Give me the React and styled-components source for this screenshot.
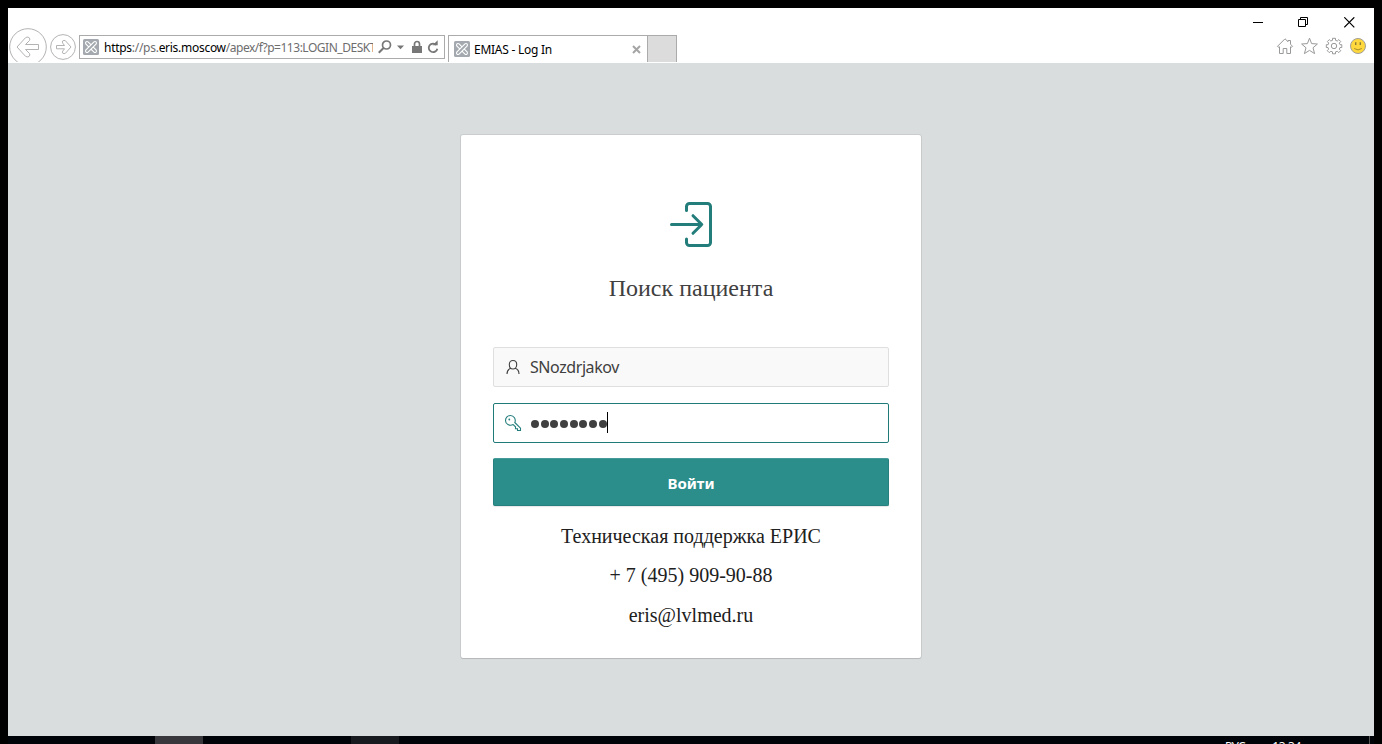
import React from 'react';
import styled, { createGlobalStyle } from 'styled-components';

const Global = createGlobalStyle`
  * { box-sizing: border-box; }
  html, body { margin: 0; background: #000; overflow: hidden; }
  svg { display: block; flex: none; }
`;

const uiFont = '"Noto Sans", "Open Sans", sans-serif';

const Screen = styled.div`
  width: 1382px;
  height: 744px;
  padding: 8px 8px 0;
  background: #000;
  overflow: hidden;
  display: flex;
  flex-direction: column;
  font-family: ${uiFont};
`;

const Chrome = styled.header`
  height: 55px;
  flex: none;
  background: #fff;
  display: flex;
  justify-content: space-between;
`;

const Navigation = styled.div`
  height: 34px;
  margin: 20px 0 0 1px;
  display: flex;
  align-items: flex-start;
  gap: 3px;
  overflow: hidden;
`;

const ForwardSlot = styled.div`
  padding-top: 6px;
`;

const AddressBar = styled.div`
  width: 366px;
  height: 24px;
  margin-top: 7px;
  padding: 0 5px 0 3px;
  border: 1px solid #ababab;
  display: flex;
  align-items: center;
`;

const Url = styled.div`
  width: 269px;
  margin: 1px 5px 0 5px;
  font-size: 12px;
  line-height: 20px;
  letter-spacing: -0.28px;
  white-space: nowrap;
  overflow: hidden;
  color: #6d6d6d;
  b { font-weight: 400; color: #000; }
`;

const UrlPath = styled.span`
  letter-spacing: -0.48px;
`;

const AddressTools = styled.div`
  display: flex;
  align-items: center;
`;

const Tabs = styled.div`
  display: flex;
  height: 27px;
  margin-top: 7px;
`;

const Tab = styled.div`
  width: 200px;
  border: 1px solid #ababab;
  border-bottom: 0;
  padding: 0 6px 0 5px;
  display: flex;
  align-items: center;
`;

const TabTitle = styled.span`
  flex: 1;
  margin: 2px 0 0 4px;
  font-size: 12px;
  line-height: 18px;
  letter-spacing: -0.26px;
  white-space: nowrap;
  color: #000;
`;

const NewTab = styled.div`
  width: 29px;
  background: #dcdcdc;
  border: solid #ababab;
  border-width: 1px 1px 0 0;
`;

const WindowSide = styled.div`
  display: flex;
  flex-direction: column;
  align-items: flex-end;
`;

const Captions = styled.div`
  height: 28px;
  padding-right: 19px;
  display: flex;
  align-items: center;
  gap: 34px;
  svg:last-child { margin-left: 1px; }
`;

const Commands = styled.div`
  height: 20px;
  padding-right: 7px;
  display: flex;
  align-items: center;
  gap: 6px;
  svg:first-child { margin-right: 1px; }
`;

const Page = styled.main`
  height: 673px;
  flex: none;
  padding-top: 72px;
  background: #d9dddd;
  display: flex;
  justify-content: center;
  align-items: flex-start;
`;

const Card = styled.section`
  width: 460px;
  height: 523px;
  padding: 65px 32px 0;
  background: #fff;
  border-radius: 2px;
  box-shadow: 0 0 0 1px rgba(0, 0, 0, 0.07), 0 1px 1px rgba(0, 0, 0, 0.1);
  display: flex;
  flex-direction: column;
  align-items: center;
`;

const Title = styled.h1`
  margin: 24px 0 0;
  font: 400 24px/32px "Liberation Serif", serif;
  color: #404040;
`;

const Field = styled.div`
  width: 100%;
  height: 40px;
  margin-top: ${(p) => p.$top};
  padding-left: 10px;
  border: 1px solid ${(p) => (p.$focused ? '#1f7a78' : '#dfdfdf')};
  border-radius: 2px;
  background: ${(p) => (p.$focused ? '#fff' : '#f9f9f9')};
  display: flex;
  align-items: center;
  gap: 8px;
`;

const Username = styled.span`
  font-size: 16px;
  line-height: 22px;
  letter-spacing: -0.42px;
  color: #404040;
`;

const Password = styled.span`
  height: 21px;
  margin-bottom: 1px;
  border-right: 1px solid #000;
  display: flex;
  align-items: center;
  gap: 1.7px;
  padding: 3px 0 0 1px;
`;

const Dot = styled.i`
  width: 8px;
  height: 8px;
  border-radius: 50%;
  background: #404040;
`;

const Submit = styled.button`
  width: 100%;
  height: 48px;
  margin: 15px 0 0;
  padding: 1px 0 0;
  border: 1px solid #26807e;
  border-top-color: #469b98;
  border-radius: 2px;
  background: #2b8e8b;
  box-shadow: 0 1px 1px rgba(0, 0, 0, 0.1);
  color: #fff;
  font: 700 15px/20px ${uiFont};
  flex: none;
`;

const Support = styled.div`
  margin-top: 18px;
  display: flex;
  flex-direction: column;
  align-items: center;
  gap: 15px;
  font: 20px/24px "Liberation Serif", serif;
  color: #202020;
  span:last-child { margin-top: 1px; }
`;

const Taskbar = styled.footer`
  height: 8px;
  flex: none;
  background: #000308;
  overflow: hidden;
  display: flex;
`;

const TaskItem = styled.div`
  width: 48px;
  margin-left: ${(p) => p.$left};
  background: ${(p) => p.$color};
`;

const Tray = styled.div`
  margin-left: auto;
  padding: 2px 68px 0 0;
  display: flex;
  gap: 27px;
  font: 12px/17px ${uiFont};
  letter-spacing: -0.4px;
  color: #fff;
`;

const DesktopEdge = styled.div`
  width: 1px;
  margin-right: 4px;
  background: #555;
`;

const SiteIcon = () => (
  <svg width="16" height="16" viewBox="0 0 16 16">
    <rect width="16" height="16" rx="1.5" fill="#a3a9ae" />
    <g fill="none" strokeLinecap="round">
      <path d="M4 4l8 8" stroke="#fff" strokeWidth="4" />
      <path d="M4 4l8 8" stroke="#a3a9ae" strokeWidth="1.8" />
      <path d="M12 4l-8 8" stroke="#fff" strokeWidth="4" />
      <path d="M12 4l-8 8" stroke="#a3a9ae" strokeWidth="1.8" />
    </g>
  </svg>
);

const BackIcon = () => (
  <svg width="38" height="34" viewBox="0 0 38 34" fill="none" stroke="#b3b3b3">
    <circle cx="19" cy="19" r="18.3" />
    <path d="M8 19L16.5 9.7Q18 8.5 20 9.5Q21.5 11 20.5 12.5L16.5 16.5H29.5V21.5H16.5L20.5 25.5Q21.5 27 20 28.5Q18 29.5 16.5 28.3Z" />
  </svg>
);

const ForwardIcon = () => (
  <svg width="26" height="26" viewBox="0 0 26 26" fill="none" stroke="#b3b3b3">
    <circle cx="13" cy="13" r="12.4" />
    <path d="M21 13L15.5 6.8Q14 5.8 12.6 7Q12 8 12.8 9.2L14.5 11.5H6.5V14.8H14.5L12.8 17Q12 18.2 12.8 19.2Q14 20.2 15.5 19.2Z" />
  </svg>
);

export default function App() {
  return (
    <Screen>
      <Global />
      <Chrome>
        <Navigation>
          <BackIcon />
          <ForwardSlot><ForwardIcon /></ForwardSlot>
          <AddressBar>
            <SiteIcon />
            <Url>
              <b>https</b>://ps.<b>eris.moscow</b>
              <UrlPath>/apex/f?p=113:LOGIN_DESKTOP</UrlPath>
            </Url>
            <AddressTools>
              <svg width="61" height="14" viewBox="0 0 61 14" fill="none" stroke="#777" strokeWidth="2">
                <circle cx="8.5" cy="5" r="4" strokeWidth="1.7" />
                <path d="M5.5 8L0.8 12.8" />
                <path d="M19 5.5h7l-3.5 3.7z" fill="#777" stroke="none" />
                <path d="M36.5 6V4a2.5 2.5 0 0 1 5 0v2" strokeWidth="1.7" />
                <rect x="34" y="6" width="10" height="7" fill="#777" stroke="none" />
                <path d="M58.3 5A4.3 4.3 0 1 0 59.3 8.7" strokeWidth="1.8" />
                <path d="M54.5 5.3h5.2V0.3z" fill="#777" stroke="none" />
              </svg>
            </AddressTools>
          </AddressBar>
          <Tabs>
            <Tab>
              <SiteIcon />
              <TabTitle>EMIAS - Log In</TabTitle>
              <svg width="9" height="9" viewBox="0 0 9 9" stroke="#a5a5a5" strokeWidth="2">
                <path d="M1 1l7 7M8 1l-7 7" />
              </svg>
            </Tab>
            <NewTab />
          </Tabs>
        </Navigation>
        <WindowSide>
          <Captions>
            <svg width="11" height="11" stroke="#000"><path d="M0 5.5h10" /></svg>
            <svg width="11" height="11" stroke="#000" fill="none">
              <path d="M0.5 2.5h7v7h-7zM2.5 2.5v-2h7v7h-2" />
            </svg>
            <svg width="11" height="11" stroke="#000" strokeWidth="1.2"><path d="M0.3 0.3l10 10M10.3 0.3l-10 10" /></svg>
          </Captions>
          <Commands>
            <svg width="18" height="18" viewBox="0 0 18 18" fill="none" stroke="#999">
              <path d="M1.5 9.3L9 1.8L12 4.7V3.5H14.5V7.2L16.5 9.3Q16 10.8 14.5 9.8V16.5H10.8V11.5H7.2V16.5H3.5V9.8Q2 10.8 1.5 9.3Z" />
            </svg>
            <svg width="18" height="18" viewBox="0 0 18 18" fill="none" stroke="#999">
              <path d="M8.5 1.2L10.6 6.6L16.4 7L12 10.8L13.6 16.6L8.5 13.4L3.4 16.6L5 10.8L0.6 7L6.4 6.6Z" />
            </svg>
            <svg width="18" height="18" viewBox="0 0 18 18" fill="none" stroke="#999">
              <path d="M7.5 1.3h3v2l1.8.7 1.5-1.4 1.9 1.9-1.4 1.6.7 1.6h1.8v2.8h-1.8l-.7 1.7 1.4 1.5-1.9 1.9-1.5-1.3-1.8.6v1.9h-3v-1.9l-1.7-.6-1.6 1.3-1.9-1.9 1.3-1.5-.6-1.7H1.3V7.7h1.8l.6-1.6-1.3-1.6 1.9-1.9L5.8 4l1.7-.7z" />
              <circle cx="9" cy="9" r="2.7" />
            </svg>
            <svg width="18" height="18" viewBox="0 0 18 18">
              <circle cx="9" cy="9" r="7.5" fill="#ffd83d" stroke="#a09e98" />
              <path d="M6.7 5.2v2.8M11.3 5.2v2.8" stroke="#8d7a35" strokeWidth="1.4" />
              <path d="M5.2 11.5q3.8 2.8 7.6 0" fill="none" stroke="#a88d2a" />
            </svg>
          </Commands>
        </WindowSide>
      </Chrome>
      <Page>
        <Card>
          <svg width="48" height="48" viewBox="0 0 48 48" fill="none" stroke="#227d7b" strokeWidth="3" strokeLinecap="round" strokeLinejoin="round">
            <path d="M19.5 10.5V6.5a3 3 0 0 1 3-3h18a3 3 0 0 1 3 3v36a3 3 0 0 1-3 3h-18a3 3 0 0 1-3-3v-3.5" />
            <path d="M4.5 24.5H34.5M26 15.7L34.8 24.5L26 33.3" />
          </svg>
          <Title>Поиск пациента</Title>
          <Field $top="43px">
            <svg width="18" height="18" viewBox="0 0 18 18" fill="none" stroke="#404040" strokeWidth="1.1">
              <path d="M9 2.5c2.3 0 3.7 1.6 3.7 4S11.2 11 9 11 5.3 9 5.3 6.5 6.7 2.5 9 2.5zM6.7 10.3Q3 11.8 3 16M11.3 10.3Q15 11.8 15 16" />
            </svg>
            <Username>SNozdrjakov</Username>
          </Field>
          <Field $top="16px" $focused>
            <svg width="18" height="18" viewBox="0 0 18 18" fill="none" stroke="#227d7b" strokeWidth="1.1">
              <path d="M10.8 8.5L16.5 14.2V16.5H13.5V14.7H11.5V12.8L9.2 10.6C5.5 12.5 1.5 10 1.5 6.4C1.5 3.6 3.8 1.5 6.4 1.5C10 1.5 12.2 5.3 10.8 8.5Z" />
              <circle cx="5.3" cy="5.5" r="0.9" fill="#227d7b" stroke="none" />
            </svg>
            <Password>
              {Array.from({ length: 8 }, (_, i) => <Dot key={i} />)}
            </Password>
          </Field>
          <Submit>Войти</Submit>
          <Support>
            <span>Техническая поддержка ЕРИС</span>
            <span>+ 7 (495) 909-90-88</span>
            <span>eris@lvlmed.ru</span>
          </Support>
        </Card>
      </Page>
      <Taskbar>
        <TaskItem $left="147px" $color="#38373c" />
        <TaskItem $left="148px" $color="#171b1f" />
        <Tray>
          <span>РУС</span>
          <span>13:34</span>
        </Tray>
        <DesktopEdge />
      </Taskbar>
    </Screen>
  );
}
